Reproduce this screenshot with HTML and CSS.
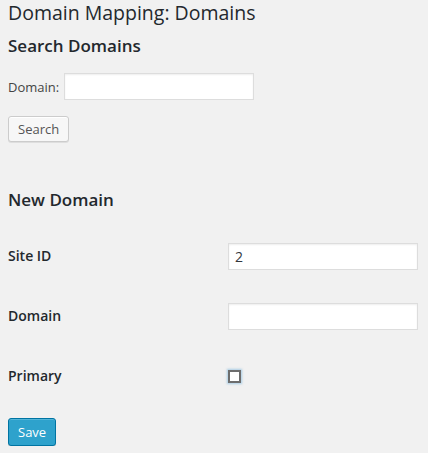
FILE: index.html
```html
<!DOCTYPE html>
<html>
<head>
<meta charset="utf-8">
<link rel="stylesheet" href="styles.css">
</head>
<body>
<div class="wrap">
  <h1 class="title">Domain Mapping: Domains</h1>
  <h2 class="section">Search Domains</h2>
  <form class="search-form">
    <div class="search-row">
      <label class="small-label" for="s">Domain:</label>
      <input class="text-input" id="s" type="text">
    </div>
    <button class="btn" type="button">Search</button>
  </form>
  <h2 class="section section-new">New Domain</h2>
  <form class="new-form">
    <div class="form-table">
      <label class="field-label" for="site">Site ID</label>
      <div class="field"><input class="text-input" id="site" type="text" value="2"></div>
      <label class="field-label" for="dom">Domain</label>
      <div class="field"><input class="text-input" id="dom" type="text"></div>
      <label class="field-label" for="prim">Primary</label>
      <div class="field"><span class="checkbox" id="prim"></span></div>
    </div>
    <button class="btn btn-primary" type="button">Save</button>
  </form>
</div>
</body>
</html>
```

FILE: styles.css
```css
html, body {
  margin: 0;
  padding: 0;
  background: #f1f1f1;
}
body {
  font-family: "Open Sans", "Liberation Sans", sans-serif;
  color: #444;
  font-size: 13px;
}
.wrap {
  padding: 0 8px;
}
.title {
  margin: 0;
  font-size: 19.5px;
  line-height: 26px;
  font-weight: 400;
  color: #23282d;
}
.section {
  margin: 9px 0 0;
  font-size: 17px;
  line-height: 22px;
  font-weight: 600;
  color: #23282d;
}
.section-new {
  margin-top: 47px;
}
.search-form {
  margin: 16px 0 0;
}
.search-row {
  display: flex;
  align-items: center;
  gap: 5px;
}
.small-label {
  font-size: 13px;
  line-height: 18px;
  color: #444;
}
.text-input {
  box-sizing: border-box;
  width: 190px;
  height: 27px;
  margin: 0;
  padding: 2px 6px;
  border: 1px solid #ddd;
  background: #fff;
  box-shadow: inset 0 1px 2px rgba(0,0,0,.07);
  font-family: "Open Sans", "Liberation Sans", sans-serif;
  font-size: 14px;
  color: #32373c;
  outline: none;
}
.btn {
  display: block;
  box-sizing: border-box;
  margin: 16px 0 0;
  height: 26px;
  padding: 0 9px;
  border: 1px solid #ccc;
  border-radius: 3px;
  background: #f7f7f7;
  box-shadow: inset 0 1px 0 #fff, 0 1px 0 rgba(0,0,0,.08);
  color: #555;
  font-family: "Open Sans", "Liberation Sans", sans-serif;
  font-size: 13px;
  line-height: 24px;
}
.new-form {
  margin: 15px 0 0;
}
.form-table {
  display: grid;
  grid-template-columns: 220px 190px;
  grid-auto-rows: 60px;
  align-items: center;
}
.field-label {
  font-size: 14px;
  line-height: 20px;
  font-weight: 600;
  color: #23282d;
}
.field {
  display: flex;
  align-items: center;
}
.checkbox {
  display: block;
  box-sizing: border-box;
  width: 13px;
  height: 13px;
  border: 2px solid #6d6d6d;
  background: #fff;
  box-shadow: 0 0 2px 1px rgba(120,180,220,.6);
}
.btn-primary {
  margin-top: 12px;
  height: 28px;
  padding: 0 9px;
  background: #2ea2cc;
  border-color: #0074a2;
  box-shadow: inset 0 1px 0 rgba(120,200,230,.5), 0 1px 0 rgba(0,0,0,.15);
  color: #fff;
  line-height: 26px;
}
```
